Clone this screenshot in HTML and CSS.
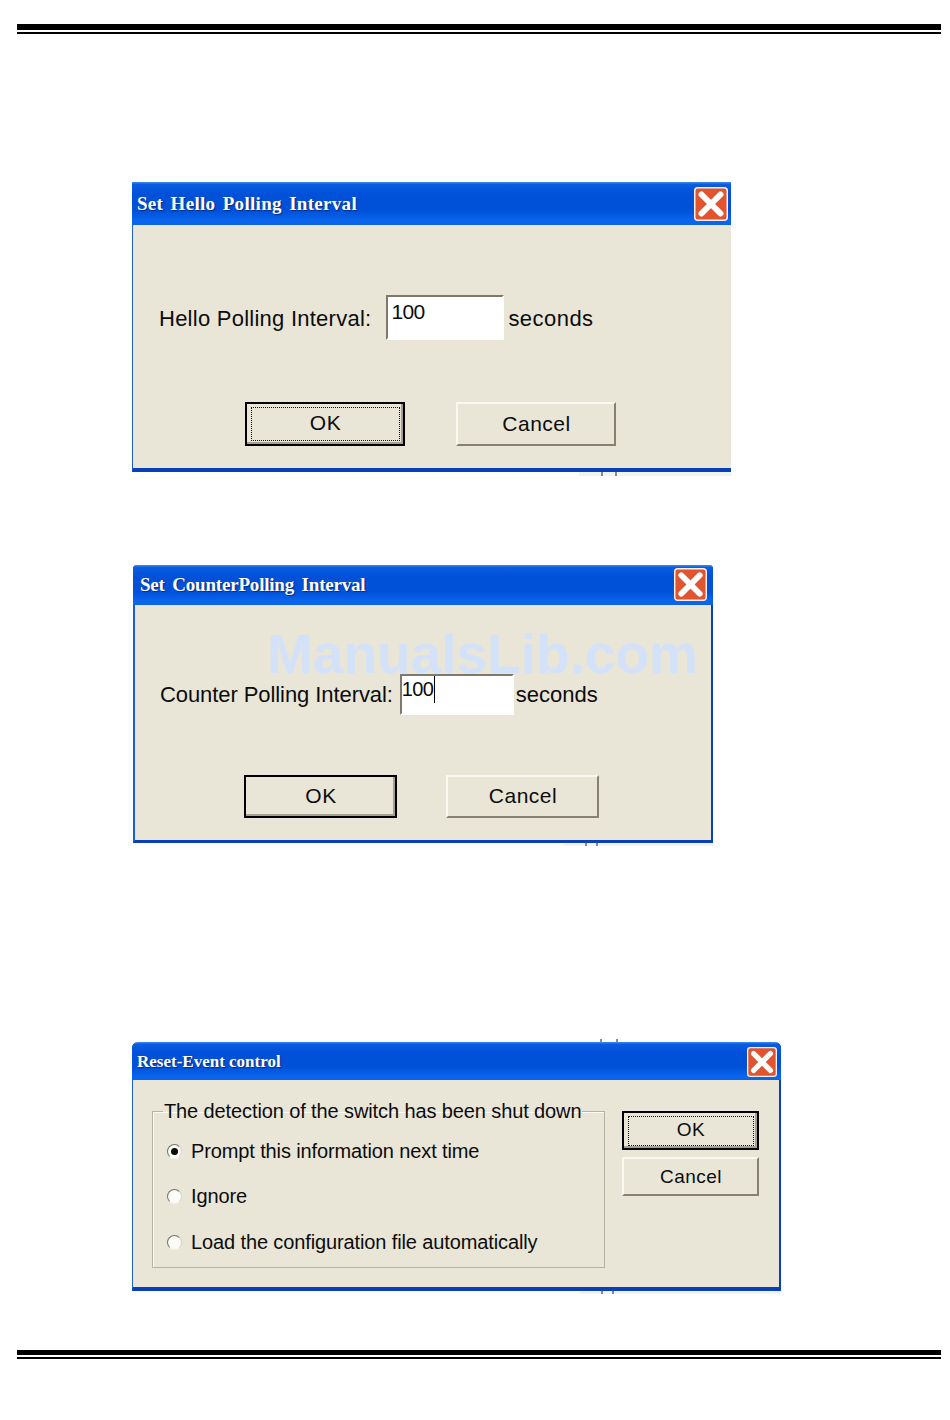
FILE: index.html
```html
<!DOCTYPE html>
<html lang="en">
<head>
<meta charset="utf-8">
<title>Polling Interval Dialogs</title>
<link rel="stylesheet" href="styles.css">
</head>
<body>
<div class="rule rule-top"></div>

<section class="dialog dialog-hello">
  <header class="titlebar">
    <h2 class="title">Set Hello Polling Interval</h2>
    <svg class="close" viewBox="0 0 34 34" aria-hidden="true"><rect x="0.75" y="0.75" width="32.5" height="32.5" rx="3" fill="#e0552f" stroke="#f4f0ec" stroke-width="1.5"/><path d="M7.5 7.5L26.5 26.5M26.5 7.5L7.5 26.5" stroke="#fff" stroke-width="6" stroke-linecap="round"/></svg>
  </header>
  <div class="content">
    <div class="field">
      <span class="label">Hello Polling Interval:</span>
      <div class="input">100</div>
      <span class="unit">seconds</span>
    </div>
    <div class="actions">
      <div class="btn btn-default"><span class="focus">OK</span></div>
      <div class="btn">Cancel</div>
    </div>
  </div>
</section>

<section class="dialog dialog-counter">
  <header class="titlebar">
    <h2 class="title">Set CounterPolling Interval</h2>
    <svg class="close" viewBox="0 0 34 34" aria-hidden="true"><rect x="0.75" y="0.75" width="32.5" height="32.5" rx="3" fill="#e0552f" stroke="#f4f0ec" stroke-width="1.5"/><path d="M7.5 7.5L26.5 26.5M26.5 7.5L7.5 26.5" stroke="#fff" stroke-width="6" stroke-linecap="round"/></svg>
  </header>
  <div class="content">
    <div class="field">
      <span class="label">Counter Polling Interval:</span>
      <div class="input"><span class="caret">100</span></div>
      <span class="unit">seconds</span>
    </div>
    <div class="actions">
      <div class="btn btn-default">OK</div>
      <div class="btn">Cancel</div>
    </div>
  </div>
  <div class="watermark">ManualsLib.com</div>
</section>

<section class="dialog dialog-reset">
  <header class="titlebar">
    <h2 class="title">Reset-Event control</h2>
    <svg class="close" viewBox="0 0 34 34" aria-hidden="true"><rect x="0.75" y="0.75" width="32.5" height="32.5" rx="3" fill="#e0552f" stroke="#f4f0ec" stroke-width="1.5"/><path d="M7.5 7.5L26.5 26.5M26.5 7.5L7.5 26.5" stroke="#fff" stroke-width="6" stroke-linecap="round"/></svg>
  </header>
  <div class="content">
    <fieldset class="group">
      <legend class="legend">The detection of the switch has been shut down</legend>
      <div class="option"><span class="radio radio-on"></span>Prompt this information next time</div>
      <div class="option"><span class="radio"></span>Ignore</div>
      <div class="option"><span class="radio"></span>Load the configuration file automatically</div>
    </fieldset>
    <div class="side">
      <div class="btn btn-default"><span class="focus">OK</span></div>
      <div class="btn">Cancel</div>
    </div>
  </div>
</section>

<div class="rule rule-bottom"></div>
</body>
</html>
```
FILE: styles.css
```css
* { box-sizing: border-box; }

html, body { margin: 0; background: #fff; }

body {
  width: 950px;
  height: 1420px;
  padding-top: 24px;
  overflow: hidden;
  font-family: "Liberation Sans", Arial, sans-serif;
  color: #0c0c0c;
}

.rule {
  width: 924px;
  height: 10px;
  margin-left: 17px;
  border-top: 6px solid #000;
  border-bottom: 2px solid #000;
}

.rule-bottom {
  height: 9px;
  margin-top: 59px;
  border-top-width: 5px;
}

.dialog {
  --tick: 36px;
  position: relative;
  display: flex;
  flex-direction: column;
  background: #e9e6d8;
  border-left: 1px solid #1c5fd0;
  border-bottom: 4px solid #0840b8;
}

.dialog::after {
  content: "";
  position: absolute;
  top: 100%;
  height: 4px;
  margin-top: 4px;
  background:
    linear-gradient(#8a8a8a, #8a8a8a) 22px 0 / 2px 100% no-repeat,
    linear-gradient(#8a8a8a, #8a8a8a) var(--tick) 0 / 2px 100% no-repeat,
    #f3f3f1;
}

.dialog-hello {
  width: 599px;
  height: 290px;
  margin: 148px 0 0 132px;
}

.dialog-hello::after { left: 446px; width: 153px; }

.dialog-counter {
  --tick: 33px;
  width: 580px;
  height: 278px;
  margin: 93px 0 0 133px;
  border-left-width: 2px;
  border-right: 2px solid #0840b8;
  border-bottom-width: 3px;
  border-radius: 4px 4px 0 0;
}

.dialog-counter::after { left: 428px; width: 150px; height: 3px; margin-top: 3px; }

.dialog-reset {
  --tick: 33px;
  width: 649px;
  height: 249px;
  margin: 199px 0 0 132px;
  border-right: 2px solid #0840b8;
  border-radius: 6px 6px 0 0;
}

.dialog-reset::after { left: 446px; width: 202px; height: 3px; margin-top: 4px; }

.dialog-reset::before {
  content: "";
  position: absolute;
  left: 467px;
  top: -3px;
  width: 14px;
  height: 3px;
  border-left: 2px solid #8a8a8a;
  border-right: 2px solid #8a8a8a;
}

.titlebar {
  display: flex;
  align-items: center;
  justify-content: space-between;
  height: 43px;
  margin-left: -1px;
  padding: 0 3px 0 5px;
  background: linear-gradient(#3f8cf0 0, #0a5ce0 6%, #0050d8 30%, #0050d8 65%, #0a66ee 92%, #0c62e4 100%);
  border-radius: inherit;
}

.dialog-counter .titlebar { height: 40px; margin: 0 -2px; padding: 0 6px 2px 7px; }
.dialog-reset .titlebar { height: 38px; margin: 0 -2px 0 -1px; padding: 1px 4px 0 5px; }

.title {
  margin: 0;
  font: bold 19px/1 "Liberation Serif", "Times New Roman", serif;
  letter-spacing: 0.3px;
  word-spacing: 2.3px;
  color: #fff;
  text-shadow: 1px 1px 1px #0a2a80;
}

.dialog-counter .title { letter-spacing: -0.2px; word-spacing: 3px; }
.dialog-reset .title { font-size: 17px; letter-spacing: 0; word-spacing: 0; }

.close { display: block; width: 34px; height: 34px; flex: none; }
.dialog-counter .close { width: 33px; height: 33px; margin-bottom: -1px; }
.dialog-reset .close { width: 30px; height: 30px; }

.content { flex: 1; display: flex; flex-direction: column; font-size: 22px; }

.field { display: flex; align-items: center; }

.dialog-hello .field { padding: 70px 0 0 26px; gap: 4px; }
.dialog-counter .field { padding: 69px 0 0 25px; gap: 2px; }

.dialog-hello .label { margin-right: 11px; padding-top: 2px; letter-spacing: 0.25px; }
.dialog-hello .unit { padding-top: 2px; letter-spacing: 0.45px; }
.dialog-counter .label { margin-right: 5px; letter-spacing: -0.08px; }

.input {
  background: #fff;
  border-top: 2px solid #80796a;
  border-left: 2px solid #80796a;
  border-right: 2px solid #fff;
  border-bottom: 2px solid #fff;
  line-height: 26px;
}

.dialog-hello .input {
  width: 118px;
  height: 45px;
  padding: 2px 0 0 3px;
  font-size: 21px;
  letter-spacing: -0.6px;
}

.dialog-counter .input {
  width: 114px;
  height: 41px;
  padding: 0;
  font-size: 20px;
  letter-spacing: -0.6px;
}

.caret { display: inline-block; height: 27px; padding-right: 1px; border-right: 1px solid #000; }

.actions { display: flex; }

.dialog-hello .actions { padding: 62px 0 0 112px; gap: 51px; }
.dialog-counter .actions { padding: 60px 0 0 109px; gap: 49px; }

.btn {
  display: flex;
  align-items: center;
  justify-content: center;
  padding: 0 0 2px 1px;
  background: #e9e6d8;
  border-style: solid;
  border-width: 2px;
  border-color: #f8f7f0 #86826f #86826f #f8f7f0;
  font-size: 21px;
  line-height: 1;
  letter-spacing: 0.5px;
}

.dialog-hello .btn { width: 160px; height: 44px; }
.dialog-counter .btn { width: 153px; height: 43px; }

.btn-default {
  border-color: #000;
  box-shadow: inset -2px -2px 0 #a5a192;
}

.focus {
  display: flex;
  align-items: center;
  justify-content: center;
  align-self: stretch;
  flex: 1;
  margin: 3px 3px 1px;
  padding-bottom: 3px;
  border: 1px dotted #111;
}

.dialog-reset .content { flex-direction: row; align-items: flex-start; padding: 20px 0 0 19px; gap: 17px; }

.group {
  width: 453px;
  height: 168px;
  margin: 0;
  padding: 17px 0 0 14px;
  border: 1px solid #b4b2a4;
  box-shadow: inset 1px 1px 0 #fbfaf4;
  min-width: 0;
}

.legend {
  margin-left: -4px;
  padding: 0 1px;
  font-size: 20px;
  line-height: 22px;
  letter-spacing: -0.11px;
  white-space: nowrap;
}

.option {
  display: flex;
  align-items: center;
  height: 24px;
  margin-bottom: 21.5px;
  font-size: 20px;
  letter-spacing: -0.12px;
}

.radio {
  position: relative;
  flex: none;
  width: 15px;
  height: 15px;
  margin-right: 9px;
  border-radius: 50%;
  background: #fbfbf8;
  border: 1px solid;
  border-color: #767266 #d8d6c8 #f4f3ea #767266;
}

.radio-on::after {
  content: "";
  position: absolute;
  left: 3px;
  top: 3px;
  width: 7px;
  height: 7px;
  border-radius: 50%;
  background: #0a0a0a;
}

.side { display: flex; flex-direction: column; gap: 7px; margin-top: 11px; }

.dialog-reset .btn { width: 137px; height: 39px; padding-bottom: 1px; font-size: 19px; }

.watermark {
  position: absolute;
  left: 132px;
  top: 62px;
  font-size: 55px;
  font-weight: bold;
  line-height: 1;
  color: #d3e2f8;
  white-space: nowrap;
}
```
